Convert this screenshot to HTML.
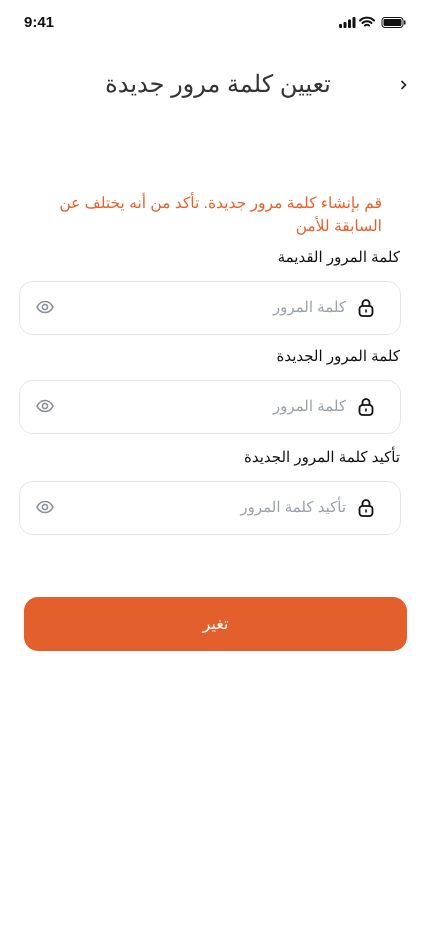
<!DOCTYPE html>
<html><head><meta charset="utf-8"><style>
*{margin:0;padding:0;box-sizing:border-box}
body{width:430px;height:932px;background:#fff;font-family:"Liberation Sans","Noto Sans CJK SC",sans-serif;position:relative;overflow:hidden;color:#111}
.abs{position:absolute}
.lbl{position:absolute;right:30px;font-size:15px;direction:rtl;color:#111}
.inp{position:absolute;left:19px;width:382px;height:54px;border:1.5px solid #e3e6ec;border-radius:14px}
.ph{position:absolute;right:54px;top:16px;font-size:15px;color:#9aa0ab;direction:rtl}
.lock{position:absolute;right:26px;top:16px}
.eye{position:absolute;left:16px;top:18px}
</style></head><body>
<div class="abs" style="left:24px;top:14px;font-size:15px;font-weight:bold">9:41</div>
<svg class="abs" style="left:338px;top:16px" width="70" height="13" viewBox="0 0 70 13">
<rect x="1" y="8" width="3" height="4" rx="1" fill="#111"/><rect x="5.5" y="6" width="3" height="6" rx="1" fill="#111"/><rect x="10" y="3.5" width="3" height="8.5" rx="1" fill="#111"/><rect x="14.5" y="1" width="3" height="11" rx="1" fill="#111"/>
<path d="M22 4.5a10 10 0 0 1 14 0M24.5 7a6.5 6.5 0 0 1 9 0M27 9.5a3 3 0 0 1 4 0" stroke="#111" stroke-width="2" fill="none" stroke-linecap="round"/>
<rect x="44" y="1.5" width="21" height="10" rx="3" fill="none" stroke="#111" stroke-width="1"/><rect x="45.5" y="3" width="18" height="7" rx="1.5" fill="#111"/><rect x="66" y="4.5" width="1.5" height="4" fill="#111"/>
</svg>
<div class="abs" style="left:0;width:436px;top:70px;text-align:center;font-size:24px;color:#333;direction:rtl">تعيين كلمة مرور جديدة</div>
<svg class="abs" style="left:399px;top:79px" width="10" height="12"><path d="M2.5 2l4 4-4 4" stroke="#222" stroke-width="1.6" fill="none"/></svg>
<div class="abs" style="right:48px;width:340px;top:192px;font-size:15.5px;line-height:23px;color:#e8602c;direction:rtl;text-align:right">قم بإنشاء كلمة مرور جديدة. تأكد من أنه يختلف عن السابقة للأمن</div>
<div class="lbl" style="top:248px">كلمة المرور القديمة</div>
<div class="inp" style="top:281px"><svg class="lock" width="16" height="20" viewBox="0 0 16 20"><rect x="1.5" y="8" width="13" height="10" rx="3" fill="none" stroke="#111" stroke-width="1.8"/><path d="M4.5 8V5.5a3.5 3.5 0 0 1 7 0V8" fill="none" stroke="#111" stroke-width="1.8"/><rect x="7.2" y="11.5" width="1.6" height="3" fill="#111"/></svg><div class="ph">كلمة المرور</div><svg class="eye" width="18" height="14" viewBox="0 0 18 14"><path d="M1 7c2-4 5-5.5 8-5.5S15 3 17 7c-2 4-5 5.5-8 5.5S3 11 1 7z" fill="none" stroke="#8a909b" stroke-width="1.6"/><circle cx="9" cy="7" r="2.6" fill="none" stroke="#8a909b" stroke-width="1.6"/></svg></div>
<div class="lbl" style="top:347px">كلمة المرور الجديدة</div>
<div class="inp" style="top:380px"><svg class="lock" width="16" height="20" viewBox="0 0 16 20"><rect x="1.5" y="8" width="13" height="10" rx="3" fill="none" stroke="#111" stroke-width="1.8"/><path d="M4.5 8V5.5a3.5 3.5 0 0 1 7 0V8" fill="none" stroke="#111" stroke-width="1.8"/><rect x="7.2" y="11.5" width="1.6" height="3" fill="#111"/></svg><div class="ph">كلمة المرور</div><svg class="eye" width="18" height="14" viewBox="0 0 18 14"><path d="M1 7c2-4 5-5.5 8-5.5S15 3 17 7c-2 4-5 5.5-8 5.5S3 11 1 7z" fill="none" stroke="#8a909b" stroke-width="1.6"/><circle cx="9" cy="7" r="2.6" fill="none" stroke="#8a909b" stroke-width="1.6"/></svg></div>
<div class="lbl" style="top:448px">تأكيد كلمة المرور الجديدة</div>
<div class="inp" style="top:481px"><svg class="lock" width="16" height="20" viewBox="0 0 16 20"><rect x="1.5" y="8" width="13" height="10" rx="3" fill="none" stroke="#111" stroke-width="1.8"/><path d="M4.5 8V5.5a3.5 3.5 0 0 1 7 0V8" fill="none" stroke="#111" stroke-width="1.8"/><rect x="7.2" y="11.5" width="1.6" height="3" fill="#111"/></svg><div class="ph">تأكيد كلمة المرور</div><svg class="eye" width="18" height="14" viewBox="0 0 18 14"><path d="M1 7c2-4 5-5.5 8-5.5S15 3 17 7c-2 4-5 5.5-8 5.5S3 11 1 7z" fill="none" stroke="#8a909b" stroke-width="1.6"/><circle cx="9" cy="7" r="2.6" fill="none" stroke="#8a909b" stroke-width="1.6"/></svg></div>
<div class="abs" style="left:24px;top:597px;width:383px;height:54px;background:#e3602c;border-radius:14px;color:#fff;font-size:16px;text-align:center;line-height:56px">تغير</div>
</body></html>
